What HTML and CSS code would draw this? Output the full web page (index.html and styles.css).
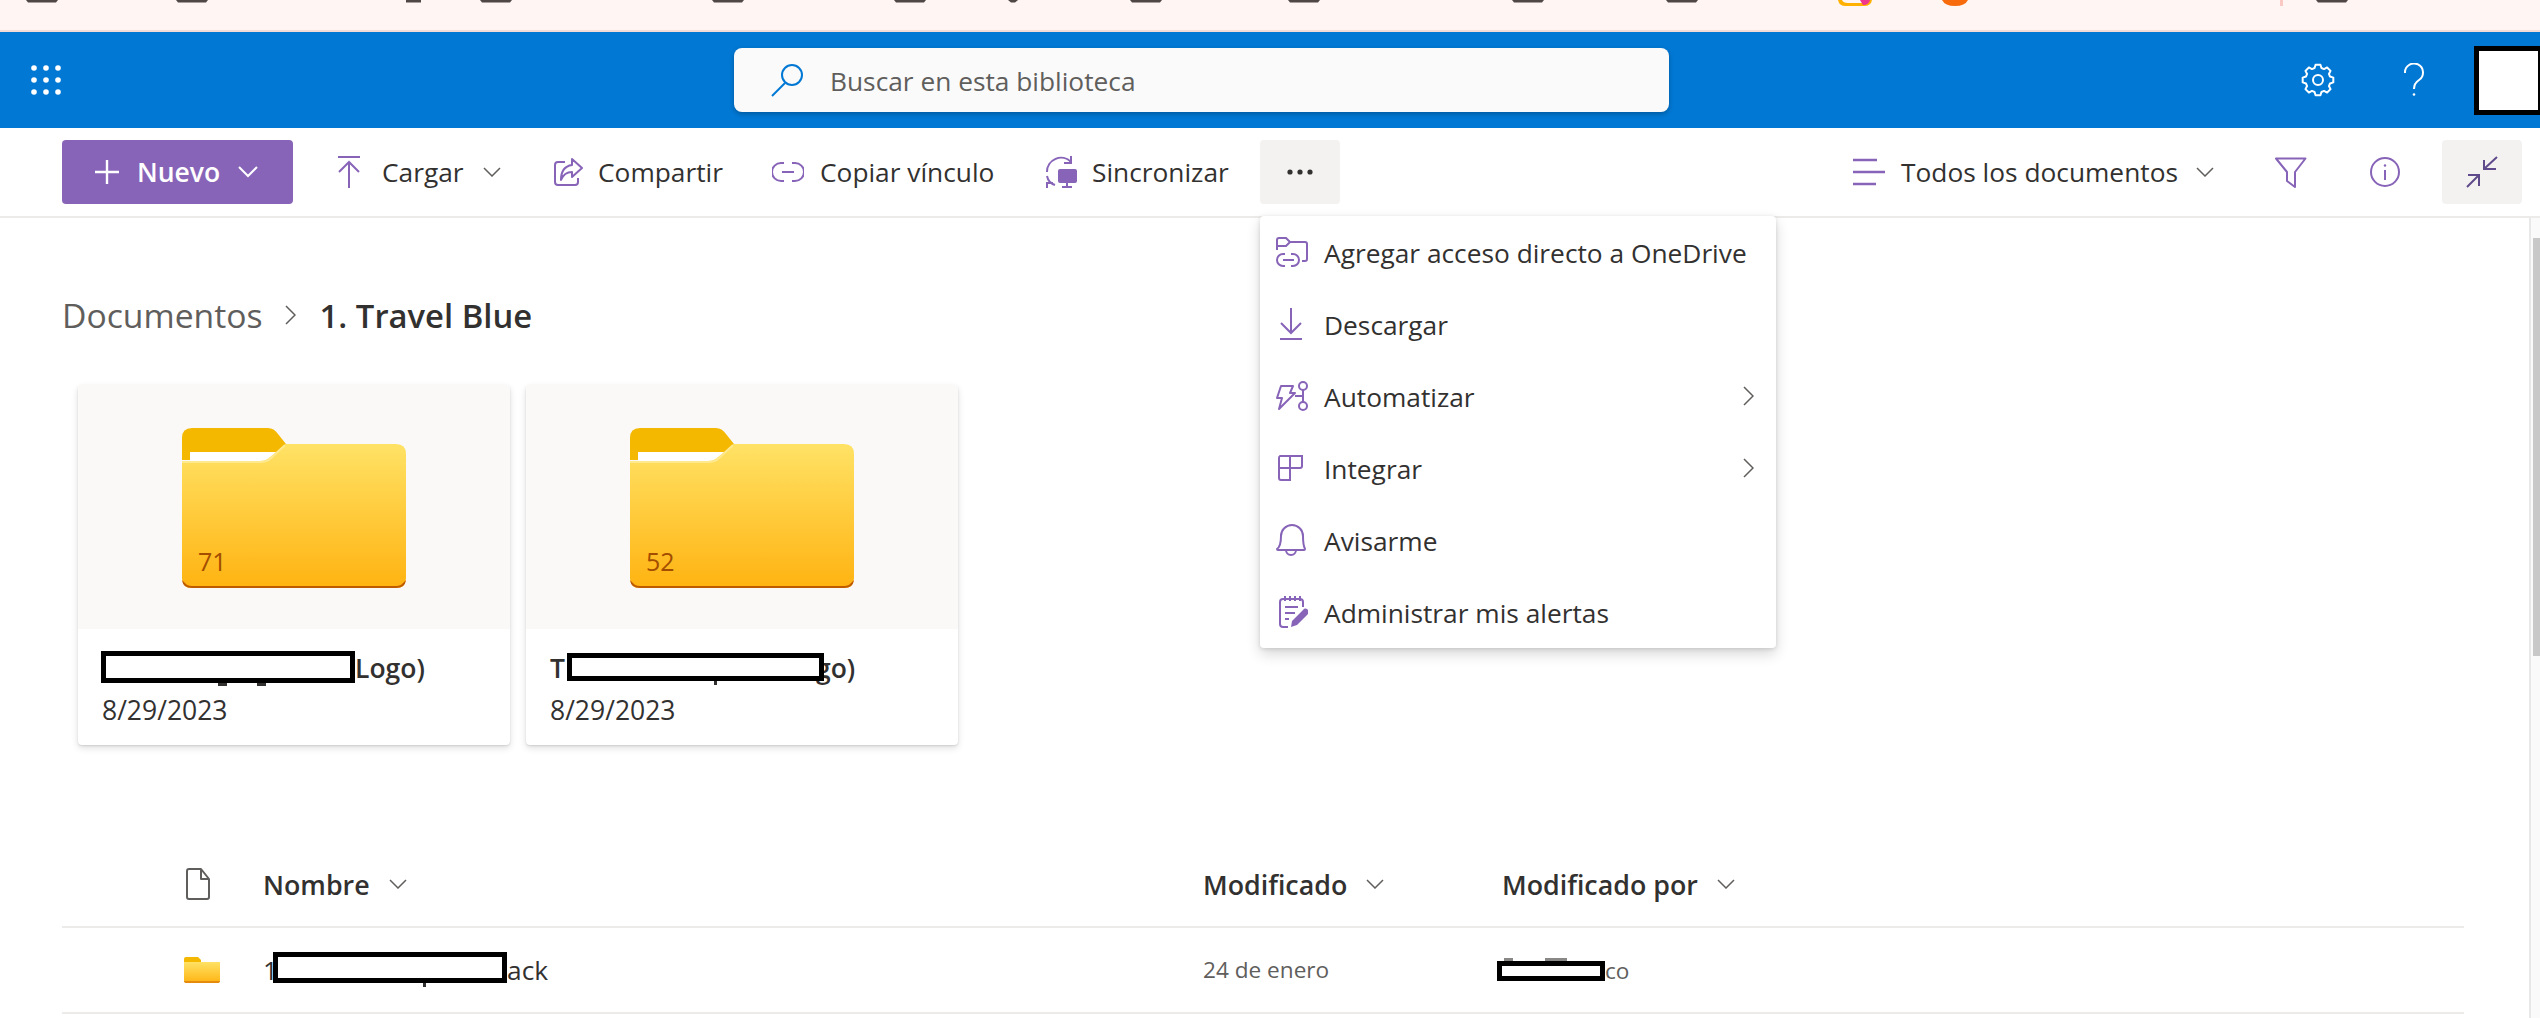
FILE: index.html
```html
<!DOCTYPE html>
<html lang="es">
<head>
<meta charset="utf-8">
<title>Documentos - 1. Travel Blue</title>
<link rel="stylesheet" href="styles.css">
</head>
<body>
<div class="page">
  <div class="favbar">
    <svg width="2540" height="30" viewBox="0 0 2540 30">
      <g fill="#4f4646">
        <path d="M26 0h32l-2 2.500h-28z"/><path d="M176 0h32l-2 2.500h-28z"/><path d="M406 0h15v2.500h-15z"/><path d="M480 0h32l-2 2.500h-28z"/>
        <path d="M712 0h32l-2 2.500h-28z"/><path d="M894 0h32l-2 2.500h-28z"/><path d="M1008 0h10l-3 2.500h-4z"/><path d="M1130 0h32l-2 2.500h-28z"/>
        <path d="M1288 0h32l-2 2.500h-28z"/><path d="M1512 0h32l-2 2.500h-28z"/><path d="M1666 0h32l-2 2.500h-28z"/><path d="M2316 0h32l-2 2.500h-28z"/>
      </g>
      <path d="M1838 0h4q1 3 6 3h14q5 0 6-3h4q-1 6-8 6h-18q-7 0-8-6z" fill="#ffb000"/>
      <path d="M1860 0h10q-1 5-7 5z" fill="#f0358c"/>
      <path d="M1942 0h26q-3 6-13 6t-13-6z" fill="#f76b0c"/>
      <rect x="2280" y="0" width="3" height="6" fill="#fbc9c4"/>
    </svg>
  </div>

  <header class="suitebar">
    <svg class="waffle" width="32" height="30" viewBox="0 0 32 30">
      <g fill="#fff">
        <circle cx="4" cy="3" r="2.8"/><circle cx="16" cy="3" r="2.8"/><circle cx="28" cy="3" r="2.8"/>
        <circle cx="4" cy="15" r="2.8"/><circle cx="16" cy="15" r="2.8"/><circle cx="28" cy="15" r="2.8"/>
        <circle cx="4" cy="27" r="2.8"/><circle cx="16" cy="27" r="2.8"/><circle cx="28" cy="27" r="2.8"/>
      </g>
    </svg>
    <div class="search">
      <svg width="34" height="34" viewBox="0 0 34 34" fill="none" stroke="#0078d4" stroke-width="2"><circle cx="22" cy="12" r="10"/><path d="M15 20L2 33"/></svg>
      <span class="search-text">Buscar en esta biblioteca</span>
    </div>
    <svg class="gear" width="34" height="34" viewBox="0 0 34 34" fill="none" stroke="#fff" stroke-width="2" stroke-linejoin="round">
      <g transform="translate(17 17)">
        <polygon points="12.02,-3.45 15.31,-2.42 15.31,2.42 12.02,3.45 10.93,6.06 12.54,9.11 9.11,12.54 6.06,10.93 3.45,12.02 2.42,15.31 -2.42,15.31 -3.45,12.02 -6.06,10.93 -9.11,12.54 -12.54,9.11 -10.93,6.06 -12.02,3.45 -15.31,2.42 -15.31,-2.42 -12.02,-3.45 -10.93,-6.06 -12.54,-9.11 -9.11,-12.54 -6.06,-10.93 -3.45,-12.02 -2.42,-15.31 2.42,-15.31 3.45,-12.02 6.06,-10.93 9.11,-12.54 12.54,-9.11 10.93,-6.06"/>
        <circle r="5"/>
      </g>
    </svg>
    <svg class="help" width="20" height="34" viewBox="0 0 20 34" fill="none" stroke="#fff" stroke-width="2"><path d="M1 10a9 9 0 1 1 14 7c-3 2-5 4-5 9"/><circle cx="10" cy="31.5" r="1.3" fill="#fff" stroke="none"/></svg>
    <div class="avatar"></div>
  </header>

  <nav class="toolbar">
    <button class="new-btn">
      <svg width="24" height="24" viewBox="0 0 24 24" stroke="#fff" stroke-width="2.4"><path d="M12 0v24M0 12h24"/></svg>
      <span>Nuevo</span>
      <svg class="new-chev" width="20" height="12" viewBox="0 0 20 12" fill="none" stroke="#fff" stroke-width="2"><path d="M1 1l9 9 9-9"/></svg>
    </button>
    <div class="cmd cmd-upload">
      <svg width="22" height="32" viewBox="0 0 22 32" fill="none" stroke="#8764b8" stroke-width="2"><path d="M0 1h22M11 32V6M1 16L11 6l10 10"/></svg>
      <span class="cmd-label">Cargar</span>
      <svg class="chev" width="18" height="10" viewBox="0 0 18 10" fill="none" stroke="#605e5c" stroke-width="1.5"><path d="M1 1l8 8 8-8"/></svg>
    </div>
    <div class="cmd cmd-share">
      <svg width="30" height="30" viewBox="0 0 30 30" fill="none" stroke="#8764b8" stroke-width="2" stroke-linejoin="round"><path d="M12 5H5a3 3 0 0 0-3 3v17a3 3 0 0 0 3 3h17a3 3 0 0 0 3-3v-4"/><path d="M19 2l10 9-10 9v-5c-6 0-9 3-11 8 0-9 4-14 11-15z"/></svg>
      <span class="cmd-label">Compartir</span>
    </div>
    <div class="cmd cmd-link">
      <svg width="32" height="22" viewBox="0 0 32 22" fill="none" stroke="#8764b8" stroke-width="2"><path d="M12 2H9a9 9 0 0 0 0 18h3M20 2h3a9 9 0 0 1 0 18h-3M10 11h12"/></svg>
      <span class="cmd-label">Copiar vínculo</span>
    </div>
    <div class="cmd cmd-sync">
      <svg width="32" height="32" viewBox="0 0 32 32" fill="none" stroke="#8764b8" stroke-width="2"><path d="M2 16A14 14 0 0 1 26 6M26 0v7h-7M2 20a12 12 0 0 0 8 9M2 32v-5h6"/><path d="M15 14h15a1 1 0 0 1 1 1v10a1 1 0 0 1-1 1H15a1 1 0 0 1-1-1V15a1 1 0 0 1 1-1zM22 26v4M17 31h10" fill="#8764b8"/></svg>
      <span class="cmd-label">Sincronizar</span>
    </div>
    <div class="more-btn">
      <svg width="26" height="6" viewBox="0 0 26 6" fill="#323130"><circle cx="3" cy="3" r="2.6"/><circle cx="13" cy="3" r="2.6"/><circle cx="23" cy="3" r="2.6"/></svg>
    </div>
    <div class="cmd cmd-view">
      <svg width="32" height="28" viewBox="0 0 32 28" stroke="#8764b8" stroke-width="2.4"><path d="M0 2h24M0 14h32M0 26h23"/></svg>
      <span class="cmd-label">Todos los documentos</span>
      <svg class="chev" width="18" height="10" viewBox="0 0 18 10" fill="none" stroke="#605e5c" stroke-width="1.5"><path d="M1 1l8 8 8-8"/></svg>
    </div>
    <div class="cmd cmd-filter">
      <svg width="33" height="31" viewBox="0 0 33 31" fill="none" stroke="#8764b8" stroke-width="2" stroke-linejoin="round"><path d="M2 1.500H31.500L21 15V30L13 24V15Z"/></svg>
    </div>
    <div class="cmd cmd-info">
      <svg width="30" height="30" viewBox="0 0 30 30" fill="none" stroke="#8764b8" stroke-width="2"><circle cx="15" cy="15" r="14"/><path d="M15 13v10"/><circle cx="15" cy="8.500" r="1.200" fill="#8764b8" stroke="none"/></svg>
    </div>
    <div class="collapse-btn">
      <svg width="32" height="32" viewBox="0 0 32 32" fill="none" stroke="#5f4b8b" stroke-width="2"><path d="M31 1L18 13M18 4v9h12M1 31L13 19M2 19h11v11"/></svg>
    </div>
  </nav>

  <main class="content">
    <div class="breadcrumb">
      <span class="crumb">Documentos</span>
      <svg class="crumb-sep" width="11" height="20" viewBox="0 0 11 20" fill="none" stroke="#605e5c" stroke-width="1.500"><path d="M1 1l9 9-9 9"/></svg>
      <span class="crumb-current">1. Travel Blue</span>
    </div>

    <section class="cards">
      <article class="card">
        <div class="thumb">
          <div class="folder">
            <svg width="224" height="160" viewBox="0 0 224 160">
              <defs><linearGradient id="fg1" x1="0" y1="0" x2="0" y2="1"><stop offset="0" stop-color="#ffe265"/><stop offset="1" stop-color="#ffb311"/></linearGradient></defs>
              <path d="M0 34V10Q0 0 10 0H86Q92 0 96 6L104 16L90 32H0Z" fill="#f4b800"/>
              <rect x="8" y="24" width="92" height="10" fill="#fff"/>
              <path d="M0 33H78Q84 33 88 29L104 16H214Q224 16 224 26V150Q224 160 214 160H10Q0 160 0 150Z" fill="url(#fg1)"/>
              <path d="M0 34H78Q85 34 89 30L103 17" fill="none" stroke="#ffe98f" stroke-width="2"/>
              <path d="M3 155Q5 158 10 158H214Q219 158 221 155L224 152Q223 160 214 160H10Q1 160 0 152Z" fill="#bf5a00"/>
            </svg>
            <span class="folder-count">71</span>
          </div>
        </div>
        <div class="card-body">
          <div class="card-title"><span class="redact redact-a"></span><span>Logo)</span></div>
          <div class="card-date">8/29/2023</div>
        </div>
      </article>
      <article class="card">
        <div class="thumb">
          <div class="folder">
            <svg width="224" height="160" viewBox="0 0 224 160">
              <path d="M0 34V10Q0 0 10 0H86Q92 0 96 6L104 16L90 32H0Z" fill="#f4b800"/>
              <rect x="8" y="24" width="92" height="10" fill="#fff"/>
              <path d="M0 33H78Q84 33 88 29L104 16H214Q224 16 224 26V150Q224 160 214 160H10Q0 160 0 150Z" fill="url(#fg1)"/>
              <path d="M0 34H78Q85 34 89 30L103 17" fill="none" stroke="#ffe98f" stroke-width="2"/>
              <path d="M3 155Q5 158 10 158H214Q219 158 221 155L224 152Q223 160 214 160H10Q1 160 0 152Z" fill="#bf5a00"/>
            </svg>
            <span class="folder-count">52</span>
          </div>
        </div>
        <div class="card-body">
          <div class="card-title"><span>T</span><span class="redact redact-b"></span><span class="tail-b">go)</span></div>
          <div class="card-date">8/29/2023</div>
        </div>
      </article>
    </section>

    <section class="list">
      <div class="list-row list-head">
        <svg class="col-icon" width="24" height="32" viewBox="0 0 24 32" fill="none" stroke="#605e5c" stroke-width="2" stroke-linejoin="round"><path d="M3 1h12l8 10v18a2 2 0 0 1-2 2H3a2 2 0 0 1-2-2V3a2 2 0 0 1 2-2zM15 1v10h8"/></svg>
        <div class="head-cell"><span>Nombre</span><svg class="chev" width="18" height="10" viewBox="0 0 18 10" fill="none" stroke="#605e5c" stroke-width="1.5"><path d="M1 1l8 8 8-8"/></svg></div>
        <div class="head-cell"><span>Modificado</span><svg class="chev" width="18" height="10" viewBox="0 0 18 10" fill="none" stroke="#605e5c" stroke-width="1.5"><path d="M1 1l8 8 8-8"/></svg></div>
        <div class="head-cell"><span>Modificado por</span><svg class="chev" width="18" height="10" viewBox="0 0 18 10" fill="none" stroke="#605e5c" stroke-width="1.5"><path d="M1 1l8 8 8-8"/></svg></div>
      </div>
      <div class="list-row">
        <svg class="col-icon" width="36" height="26" viewBox="0 0 36 26">
          <path d="M0 10V2Q0 0 2 0H14L17 3V10Z" fill="#f4b800"/>
          <path d="M0 5H36V23Q36 26 33 26H3Q0 26 0 23Z" fill="url(#fg1)"/>
          <path d="M0 24H36Q36 26 33 26H3Q0 26 0 24Z" fill="#e58a0c"/>
        </svg>
        <div class="name-cell"><span>1</span><span class="redact redact-c"></span><span>ack</span></div>
        <div class="date-cell">24 de enero</div>
        <div class="author-cell"><span class="redact redact-d"></span><span>co</span></div>
      </div>
    </section>

    <div class="menu">
      <div class="menu-item">
        <svg width="32" height="30" viewBox="0 0 32 30" fill="none" stroke="#8764b8" stroke-width="2"><path d="M1 13V3a2 2 0 0 1 2-2h7l4 4h15a2 2 0 0 1 2 2v15a2 2 0 0 1-2 2h-3M1 9h9l4-4"/><path d="M9 17H7a6 6 0 0 0 0 12h2M15 17h2a6 6 0 0 1 0 12h-2M7 23h11"/></svg>
        <span>Agregar acceso directo a OneDrive</span>
      </div>
      <div class="menu-item">
        <svg width="32" height="32" viewBox="0 0 32 32" fill="none" stroke="#8764b8" stroke-width="2"><path d="M15 0v25M5 15l10 10 10-10M4 31h22"/></svg>
        <span>Descargar</span>
      </div>
      <div class="menu-item">
        <svg width="32" height="30" viewBox="0 0 32 30" fill="none" stroke="#8764b8" stroke-width="2" stroke-linejoin="round"><path d="M5 5H17L14 12H19L3 28L6 17H1Z"/><circle cx="27" cy="5" r="4"/><circle cx="27" cy="25" r="4"/><path d="M27 9V21M19 15H27"/></svg>
        <span>Automatizar</span>
        <svg class="menu-chev" width="11" height="20" viewBox="0 0 11 20" fill="none" stroke="#605e5c" stroke-width="1.500"><path d="M1 1l9 9-9 9"/></svg>
      </div>
      <div class="menu-item">
        <svg width="32" height="26" viewBox="0 0 32 26" fill="none" stroke="#8764b8" stroke-width="2"><path d="M4 1H26V11A2 2 0 0 1 24 13H3V3A2 2 0 0 1 4 1ZM3 13V23A2 2 0 0 0 5 25H14V1"/></svg>
        <span>Integrar</span>
        <svg class="menu-chev" width="11" height="20" viewBox="0 0 11 20" fill="none" stroke="#605e5c" stroke-width="1.500"><path d="M1 1l9 9-9 9"/></svg>
      </div>
      <div class="menu-item">
        <svg width="32" height="32" viewBox="0 0 32 32" fill="none" stroke="#8764b8" stroke-width="2" stroke-linejoin="round"><path d="M1 25C4 23 5 20 5 12A11 11 0 0 1 27 12C27 20 28 23 29 25Q29 26 28 26H2Q1 26 1 25Z"/><path d="M10 26A5 5 0 0 0 20 26"/></svg>
        <span>Avisarme</span>
      </div>
      <div class="menu-item">
        <svg width="32" height="32" viewBox="0 0 32 32" fill="none" stroke="#8764b8" stroke-width="2"><path d="M23 3h1a3 3 0 0 1 3 3v5M12 31H7a3 3 0 0 1-3-3V6a3 3 0 0 1 3-3h16M9 0v5M14 0v5M19 0v5M24 0v5M9 11h13M9 17h10M9 23h4"/><path d="M15 31l1-6L27 14a2.500 2.500 0 0 1 5 4L21 29Z" fill="#8764b8" stroke="none"/></svg>
        <span>Administrar mis alertas</span>
      </div>
    </div>

    <div class="scrollbar"><div class="scroll-thumb"></div></div>
  </main>
</div>
</body>
</html>
```

FILE: styles.css
```css
* { box-sizing: border-box; }
html, body { margin: 0; padding: 0; }
body {
  font-family: "Open Sans", "Noto Sans", sans-serif;
  color: #323130;
  background: #fff;
  overflow: hidden;
}
svg { display: block; flex: none; }
.page { width: 2540px; height: 1018px; overflow: hidden; }

.favbar { height: 32px; background: #fff5f3; border-bottom: 2px solid #f3dcd8; }

.suitebar {
  height: 96px;
  background: #0078d4;
  display: flex;
  align-items: center;
  padding-left: 30px;
}
.search {
  width: 937px;
  height: 64px;
  margin-left: 672px;
  background: #fafafa;
  border-radius: 8px;
  box-shadow: 0 2px 5px rgba(0, 0, 0, .25);
  display: flex;
  align-items: center;
  padding-left: 36px;
}
.search-text { margin: 2px 0 0 26px; font-size: 26.3px; color: #605e5c; }
.gear { margin-left: 632px; }
.help { margin-left: 69px; }
.avatar {
  width: 66px;
  height: 69px;
  margin-left: 50px;
  background: #fff;
  border: 5px solid #000;
  border-right-width: 2px;
}

.toolbar {
  height: 90px;
  border-bottom: 2px solid #edebe9;
  display: flex;
  align-items: flex-start;
  padding: 12px 18px 0 62px;
  font-size: 26.3px;
}
.new-btn {
  width: 231px;
  height: 64px;
  margin-right: 45px;
  border: 0;
  border-radius: 4px;
  background: #8764b8;
  color: #fff;
  font: 600 26.5px "Open Sans", sans-serif;
  display: flex;
  align-items: center;
  padding: 0 0 0 33px;
}
.new-btn span { margin-left: 18px; }
.new-chev { margin-left: 18px; }
.cmd { height: 64px; display: flex; align-items: center; flex: none; }
.cmd-label { white-space: nowrap; }
.cmd-upload { width: 215px; }
.cmd-upload .cmd-label { margin-left: 22px; }
.cmd-upload .chev { margin-left: 19px; }
.cmd-share { width: 219px; }
.cmd-share .cmd-label { margin-left: 15px; }
.cmd-link { width: 273px; }
.cmd-link .cmd-label { margin-left: 16px; }
.cmd-sync { width: 215px; }
.cmd-sync .cmd-label { margin-left: 15px; }
.more-btn, .collapse-btn {
  width: 80px;
  height: 64px;
  background: #f3f2f1;
  border-radius: 4px;
  display: flex;
  align-items: center;
  justify-content: center;
  flex: none;
}
.cmd-view { margin-left: 513px; width: 421px; }
.cmd-view .cmd-label { margin-left: 16px; }
.cmd-view .chev { margin-left: 18px; }
.cmd-filter { width: 96px; }
.cmd-info { width: 72px; }

.content { position: relative; padding: 65px 0 0 62px; }

.breadcrumb { height: 64px; display: flex; align-items: center; }
.crumb { font-size: 33.7px; color: #605e5c; white-space: nowrap; }
.crumb-sep { margin-left: 22px; }
.crumb-current { margin-left: 24px; font-size: 32.8px; font-weight: 600; white-space: nowrap; }

.cards { display: flex; gap: 16px; margin: 38px 0 0 16px; }
.card {
  width: 432px;
  height: 360px;
  background: #fff;
  border-radius: 4px;
  box-shadow: 0 3px 7px rgba(0, 0, 0, .13), 0 1px 2px rgba(0, 0, 0, .11);
  overflow: hidden;
}
.thumb {
  height: 244px;
  background: #faf9f8;
  display: flex;
  justify-content: center;
  padding-top: 43px;
}
.folder { position: relative; width: 224px; height: 160px; }
.folder-count {
  position: absolute;
  left: 16px;
  bottom: 10px;
  font-size: 25px;
  color: #a34d00;
}
.card-body { padding: 21px 0 0 24px; }
.card-title {
  height: 36px;
  display: flex;
  align-items: center;
  font-size: 26.5px;
  font-weight: 600;
  white-space: nowrap;
}
.card-date { margin-top: 6px; line-height: 36px; font-size: 26.5px; color: #323130; }

.redact { display: block; flex: none; background: #fff; border: 5px solid #000; position: relative; z-index: 1; }
.redact-a { width: 254px; height: 32px; margin: 0 0 2px -1px; }
.redact-a::before, .redact-a::after, .redact-b::after, .redact-c::after, .redact-d::before, .redact-d::after {
  content: "";
  position: absolute;
  background: #323130;
}
.redact-a::before { left: 112px; top: 27px; width: 9px; height: 3px; }
.redact-a::after { left: 151px; top: 27px; width: 9px; height: 3px; }
.redact-b { width: 257px; height: 28px; margin: 0 0 2px 2px; }
.redact-b::after { left: 142px; top: 23px; width: 3px; height: 4px; }
.tail-b { margin-left: -8px; }
.redact-c { width: 234px; height: 31px; margin: 0 0 5px -5px; }
.redact-c::after { left: 145px; top: 26px; width: 3px; height: 4px; }
.redact-d { width: 108px; height: 20px; margin: 2px 0 0 -5px; }
.redact-d::before { left: 2px; top: -8px; width: 9px; height: 3px; background: #8a8886; }
.redact-d::after { left: 43px; top: -8px; width: 22px; height: 3px; background: #8a8886; }

.list { width: 2402px; margin-top: 97px; }
.list-row {
  height: 86px;
  border-bottom: 2px solid #edebe9;
  display: grid;
  grid-template-columns: 201px 940px 299px 1fr;
  align-items: center;
  font-size: 26.3px;
  white-space: nowrap;
}
.col-icon { margin-left: 122px; }
.list-head .col-icon { margin-left: 124px; }
.head-cell { display: flex; align-items: center; font-weight: 600; font-size: 26.8px; }
.head-cell .chev { margin-left: 19px; }
.name-cell, .author-cell { display: flex; align-items: center; }
.date-cell { font-size: 22.6px; color: #605e5c; margin-bottom: 2px; }
.author-cell { font-size: 22.6px; color: #605e5c; }

.menu {
  position: absolute;
  top: -2px;
  left: 1260px;
  width: 516px;
  background: #fff;
  border-radius: 4px;
  box-shadow: 0 6px 14px rgba(0, 0, 0, .16), 0 1px 4px rgba(0, 0, 0, .12);
  font-size: 26.3px;
}
.menu-item {
  height: 72px;
  display: flex;
  align-items: center;
  padding: 0 22px 0 16px;
  white-space: nowrap;
}
.menu-item span { margin: 1px 0 0 16px; }
.menu-chev { margin-left: auto; }

.scrollbar {
  position: absolute;
  top: 0;
  right: 0;
  width: 11px;
  height: 800px;
  background: #fafafa;
  border-left: 2px solid #e8e8e8;
  padding: 20px 0 0 2px;
}
.scroll-thumb { height: 418px; background: #c8c8c8; }
```
